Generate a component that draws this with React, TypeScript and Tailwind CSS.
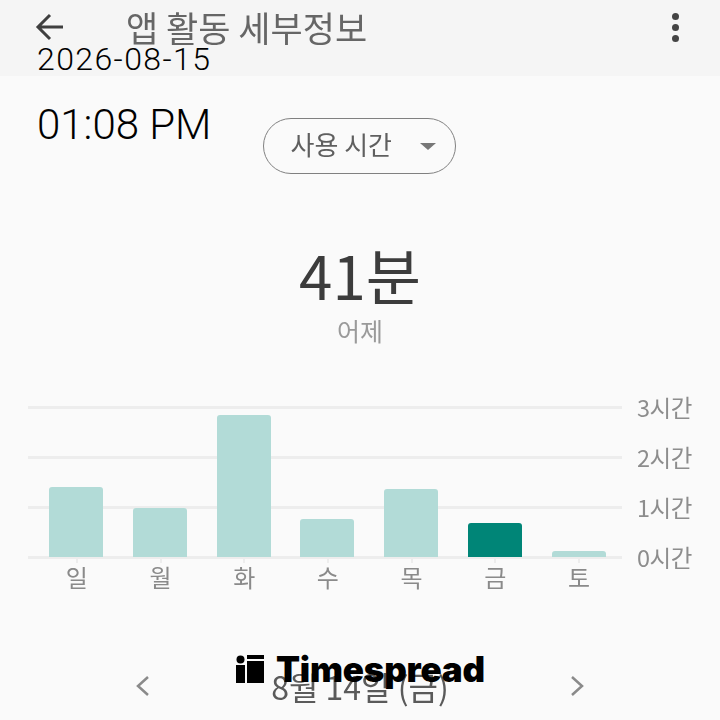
const KO = { fontFamily: '"Noto Sans CJK KR", "Noto Sans", sans-serif' };
const RB = { fontFamily: 'Roboto, "Noto Sans CJK KR", sans-serif' };

const bars = [
  { d: '일', h: 70 },
  { d: '월', h: 49 },
  { d: '화', h: 142 },
  { d: '수', h: 38 },
  { d: '목', h: 68 },
  { d: '금', h: 34, on: true },
  { d: '토', h: 6 },
];
const axis = ['3시간', '2시간', '1시간', '0시간'];

export default function App() {
  return (
    <div className="relative w-[720px] h-[720px] overflow-hidden bg-[#fafafa]" style={KO}>
      <header className="h-[76px] bg-[#f5f5f5] flex items-start justify-between pl-[35px] pr-[41px] pt-[12px] blur-[0.6px]">
        <div className="flex items-center gap-[63px]">
          <svg width="28" height="28" viewBox="0 0 28 28" fill="none" stroke="#3f3f3f" strokeWidth="3">
            <path d="M28 14H3M15 2 3 14l12 12" />
          </svg>
          <h1 className="text-[35px] leading-[30px] text-[#666] font-normal">앱 활동 세부정보</h1>
        </div>
        <div className="flex flex-col gap-[4px] items-center pt-[1px]">
          <span className="w-[7px] h-[7px] rounded-full bg-[#444]" />
          <span className="w-[7px] h-[7px] rounded-full bg-[#444]" />
          <span className="w-[7px] h-[7px] rounded-full bg-[#444]" />
        </div>
      </header>

      <div className="absolute left-[37px] top-[41px] text-[32px] leading-[36px] text-black tracking-[1.4px] font-light" style={RB}>2026-08-15</div>
      <div className="absolute left-[37px] top-[101px] text-[42px] leading-[48px] text-black font-light" style={RB}>01:08 PM</div>

      <main className="flex flex-col items-center">
        <div className="mt-[42px] ml-[-2px] w-[193px] h-[56px] rounded-full border-[1.5px] border-[#808080] flex items-center pl-[27px] gap-[28px] blur-[0.5px]">
          <span className="text-[26px] leading-[30px] text-[#5f5f5f] mt-[-5px]">사용 시간</span>
          <span className="w-0 h-0 border-x-[8px] border-x-transparent border-t-[7px] border-t-[#777]" />
        </div>

        <div className="mt-[62px] text-[60px] leading-[76px] text-[#3c3c3c] blur-[0.5px]">41분</div>
        <div className="mt-[2px] text-[25px] leading-[32px] text-[#9a9a9a] blur-[0.5px]">어제</div>

        <section className="mt-[60px] w-[720px] pl-[28px] blur-[0.6px] relative">
          <div className="h-[153px] flex flex-col justify-between">
            {axis.map((a) => (
              <div key={a} className="flex items-center h-[3px]">
                <div className="w-[594px] h-[3px] bg-[#ededed]" />
                <span className="ml-[15px] mt-[-2px] text-[23.5px] leading-[30px] text-[#8d8d8d] tracking-[-0.5px]">{a}</span>
              </div>
            ))}
          </div>
          <div className="absolute left-[49px] top-[1px] h-[150px] flex items-end gap-[29.8px]">
            {bars.map((b) => (
              <div
                key={b.d}
                className={`w-[54px] rounded-t-[3px] ${b.on ? 'bg-[#008577]' : 'bg-[#b2dbd7]'}`}
                style={{ height: b.h }}
              />
            ))}
          </div>
          <div className="flex pl-[7px] mt-[-3px]">
            {bars.map((b) => (
              <div key={b.d} className="w-[83.7px] flex flex-col items-center">
                <div className="w-[2px] h-[7px] bg-[#ededed]" />
                <span className="text-[24px] leading-[28px] text-[#8a8a8a]">{b.d}</span>
              </div>
            ))}
          </div>
        </section>

        <nav className="mt-[77px] w-[720px] pl-[135px] pr-[135px] flex items-center justify-between blur-[0.5px]">
          <svg width="16" height="22" viewBox="0 0 16 22" fill="none" stroke="#8a8a8a" strokeWidth="2.5">
            <path d="M13 2 3 11l10 9" />
          </svg>
          <span className="text-[32px] leading-[36px] text-[#5a5a5a]">8월 14일 (금)</span>
          <svg width="16" height="22" viewBox="0 0 16 22" fill="none" stroke="#8a8a8a" strokeWidth="2.5">
            <path d="M3 2l10 9-10 9" />
          </svg>
        </nav>
      </main>

      <div className="absolute left-[236px] top-[654px] flex items-center gap-[12px]">
        <svg width="28" height="28" viewBox="0 0 28 28" fill="#000">
          <circle cx="4.5" cy="4.5" r="4" />
          <rect x="0" y="10" width="9" height="18" />
          <rect x="11" y="0" width="17" height="4" />
          <rect x="11" y="6" width="17" height="22" />
        </svg>
        <span className="text-[35px] leading-[30px] font-black text-black tracking-[-0.2px]" style={{ fontFamily: 'Inter, sans-serif' }}>Timespread</span>
      </div>
    </div>
  );
}
